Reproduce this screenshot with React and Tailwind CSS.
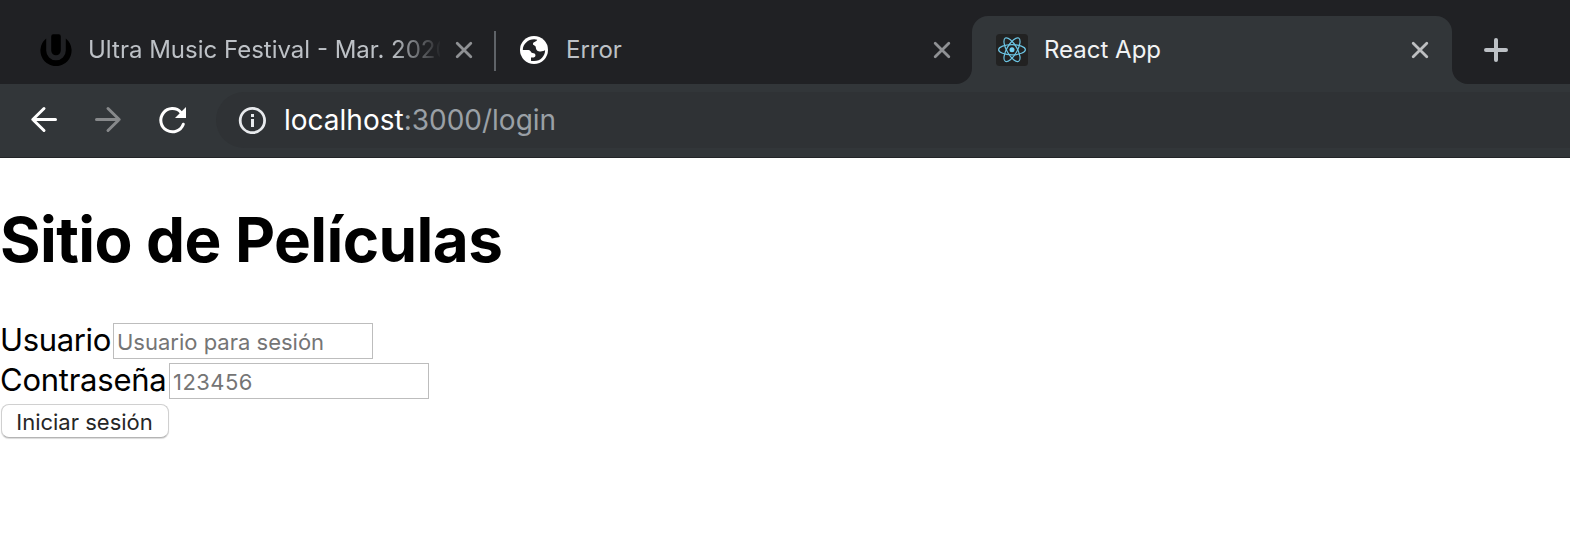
function UltraIcon() {
  return (
    <svg className="h-8 w-8 shrink-0" viewBox="0 0 32 32" fill="#000">
      <path d="M6.2 4.4A15.6 15.6 0 1 0 25.8 4.4V16.5a9.8 9.8 0 0 1-19.6 0Z" />
      <path d="M11.2 2.4Q11.2 0.4 13.2 0.3H18.8Q20.8 0.4 20.8 2.4V16.5a4.8 4.8 0 0 1-9.6 0Z" />
    </svg>
  );
}

function GlobeIcon() {
  return (
    <svg className="h-7 w-7 shrink-0" viewBox="0 0 28 28">
      <circle cx="14" cy="14" r="14" fill="#fff" />
      <path
        fill="#202124"
        d="M2.8 13.9C2.9 8 8 3.2 14.2 3.2L17.2 3.7C17 5.4 13.8 5.6 13 7.4C12.6 9.4 15.6 9 15.8 11.2C15.9 13 16.6 14.8 18.6 15.2C20.8 15.6 23.6 15.4 25.1 14C25.2 20 20.5 25.2 14 25.1C12.8 25.1 11.6 24.9 11 24.7V21.4H13.6C15.4 21.2 15.8 19.6 15.2 18.2C14.6 17 12.8 17.4 11.6 16.8C10.8 15.4 10 14.2 8.4 14Z"
      />
    </svg>
  );
}

function ReactIcon() {
  return (
    <svg className="h-8 w-8 shrink-0" viewBox="0 0 32 32">
      <rect width="32" height="32" rx="3.5" fill="#222" />
      <g fill="none" stroke="#6cc5e4" strokeWidth="1.2">
        <ellipse cx="16" cy="15.7" rx="13.4" ry="5.1" />
        <ellipse cx="16" cy="15.7" rx="13.4" ry="5.1" transform="rotate(60 16 15.7)" />
        <ellipse cx="16" cy="15.7" rx="13.4" ry="5.1" transform="rotate(120 16 15.7)" />
      </g>
      <circle cx="16" cy="15.7" r="2.5" fill="#74d2f2" />
    </svg>
  );
}

function CloseIcon({ color }) {
  return (
    <svg className="h-[18px] w-[18px] shrink-0" viewBox="0 0 18 18" stroke={color} strokeWidth="2.8" strokeLinecap="round">
      <path d="M2.2 2.2 15.8 15.8M15.8 2.2 2.2 15.8" />
    </svg>
  );
}

function TabStrip() {
  return (
    <div className="flex h-[84px] flex-col bg-[#202124] pt-4 text-2xl">
      <div className="flex h-[68px] bg-[#323639]">
        <div className="flex w-[972px] items-center rounded-br-2xl bg-[#202124] pl-10 text-[#bdc1c6]">
          <UltraIcon />
          <div className="ml-4 w-[352px] overflow-hidden whitespace-nowrap [mask-image:linear-gradient(to_right,black_304px,transparent_354px)]">
            Ultra Music Festival - Mar. 2020
          </div>
          <div className="ml-[15px] flex">
            <CloseIcon color="#8f9194" />
          </div>
          <div className="mt-0.5 ml-[21px] h-10 w-0.5 bg-[#5f6368]" />
          <div className="ml-6 flex">
            <GlobeIcon />
          </div>
          <div className="ml-[18px] w-[352px]">Error</div>
          <div className="ml-[15px] flex">
            <CloseIcon color="#8f9194" />
          </div>
        </div>
        <div className="w-[480px] bg-[#202124]">
          <div className="flex h-full items-center rounded-t-2xl bg-[#323639] pl-6 text-[#f1f3f4]">
            <ReactIcon />
            <div className="ml-4 w-[352px]">React App</div>
            <div className="ml-[15px] flex">
              <CloseIcon color="#bdbfc1" />
            </div>
          </div>
        </div>
        <div className="flex flex-1 items-center rounded-bl-2xl bg-[#202124] pl-8">
          <svg className="h-6 w-6" viewBox="0 0 24 24" stroke="#bdc1c6" strokeWidth="4" strokeLinecap="round">
            <path d="M12 2V22M2 12H22" />
          </svg>
        </div>
      </div>
    </div>
  );
}

function Toolbar() {
  return (
    <div className="flex h-[74px] border-b border-[#232528] bg-[#323639] pt-2">
      <div className="flex h-14 w-[216px] shrink-0 items-center pl-7">
        <svg className="h-8 w-8" viewBox="0 0 32 32" fill="none" stroke="#fff" strokeWidth="3" strokeLinecap="round" strokeLinejoin="round">
          <path d="M27.5 15.5H5M16 4.5 4.8 15.5 16 26.5" />
        </svg>
        <svg className="ml-8 h-8 w-8" viewBox="0 0 32 32" fill="none" stroke="#87898b" strokeWidth="3" strokeLinecap="round" strokeLinejoin="round">
          <path d="M4.5 15.5H27M16 4.5 27.2 15.5 16 26.5" />
        </svg>
        <svg className="ml-8 h-8 w-8" viewBox="0 0 32 32" fill="none">
          <path d="M25 8.4A11.6 11.6 0 1 0 27.3 20.2" stroke="#fff" strokeWidth="3" strokeLinecap="round" />
          <path d="M30 3V14H19Z" fill="#fff" />
        </svg>
      </div>
      <div className="flex h-14 flex-1 items-center rounded-l-full bg-[#2f3235] pl-[22px] text-[28px]">
        <svg className="h-7 w-7 shrink-0" viewBox="0 0 28 28">
          <circle cx="14.4" cy="14.5" r="12.2" fill="none" stroke="#e8eaed" strokeWidth="2.8" />
          <path d="M13 8H16V11H13ZM13 13H16V21H13Z" fill="#e8eaed" />
        </svg>
        <div className="ml-[18px] whitespace-nowrap text-[#9aa0a6]">
          <span className="text-white">localhost</span>:3000/login
        </div>
      </div>
    </div>
  );
}

function LoginPage() {
  return (
    <main className="text-black">
      <h1 className="mt-[43px] h-[78px] text-[62px] leading-[78px] font-bold tracking-[-0.6px]">Sitio de Películas</h1>
      <form className="mt-10" onSubmit={(e) => e.preventDefault()}>
        <div className="flex h-10 items-center text-[31px]">
          <label htmlFor="user" className="w-[113px] pt-px leading-10 tracking-[-0.35px] whitespace-nowrap">Usuario</label>
          <input
            id="user"
            type="text"
            placeholder="Usuario para sesión"
            className="mt-[3px] h-9 w-[260px] border border-[#bdbdbd] pt-0.5 pl-[3px] text-[22px] placeholder:text-[#757575]"
          />
        </div>
        <div className="flex h-10 items-center text-[31px]">
          <label htmlFor="password" className="w-[169px] pt-px leading-10 tracking-[-0.25px] whitespace-nowrap">Contraseña</label>
          <input
            id="password"
            type="password"
            placeholder="123456"
            className="mt-[3px] h-9 w-[260px] border border-[#bdbdbd] pt-0.5 pl-[3px] text-[22px] tracking-[0.45px] placeholder:text-[#757575]"
          />
        </div>
        <button
          type="submit"
          className="mt-[5px] ml-px block h-[34px] w-[168px] rounded-lg border border-[#d0d0d0] border-b-[#b4b4b4] bg-white pt-px pr-px text-center text-[22px] leading-8 whitespace-nowrap text-[#262626] shadow-[0_1px_1px_rgba(0,0,0,0.15)]"
        >
          Iniciar sesión
        </button>
      </form>
    </main>
  );
}

export default function App() {
  return (
    <div className="h-[538px] w-[1570px] overflow-hidden bg-white font-['Inter',sans-serif]">
      <TabStrip />
      <Toolbar />
      <LoginPage />
    </div>
  );
}
